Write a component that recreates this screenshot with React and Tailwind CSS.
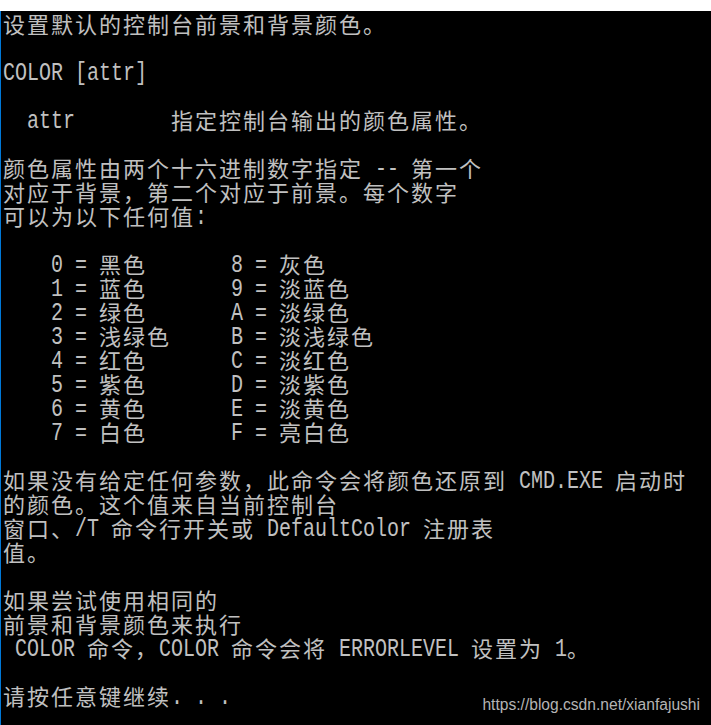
import React from "react";

const lines = [
  "设置默认的控制台前景和背景颜色。",
  "",
  "COLOR [attr]",
  "",
  "  attr        指定控制台输出的颜色属性。",
  "",
  "颜色属性由两个十六进制数字指定 -- 第一个",
  "对应于背景，第二个对应于前景。每个数字",
  "可以为以下任何值:",
  "",
  "    0 = 黑色       8 = 灰色",
  "    1 = 蓝色       9 = 淡蓝色",
  "    2 = 绿色       A = 淡绿色",
  "    3 = 浅绿色     B = 淡浅绿色",
  "    4 = 红色       C = 淡红色",
  "    5 = 紫色       D = 淡紫色",
  "    6 = 黄色       E = 淡黄色",
  "    7 = 白色       F = 亮白色",
  "",
  "如果没有给定任何参数，此命令会将颜色还原到 CMD.EXE 启动时",
  "的颜色。这个值来自当前控制台",
  "窗口、/T 命令行开关或 DefaultColor 注册表",
  "值。",
  "",
  "如果尝试使用相同的",
  "前景和背景颜色来执行",
  " COLOR 命令，COLOR 命令会将 ERRORLEVEL 设置为 1。",
  "",
  "请按任意键继续. . .",
];

function Line({ text }) {
  const runs = text.match(/[\x00-\x7f]+|[^\x00-\x7f]+/g) || [];
  return (
    <div className="h-[24px] leading-[24px] whitespace-pre">
      {runs.map((r, i) =>
        /^[\x00-\x7f]/.test(r) ? (
          <span
            key={i}
            className="inline-block align-top h-[24px] leading-[24px] overflow-visible"
            style={{ width: r.length * 12 }}
          >
            <span
              className="inline-block origin-left scale-x-80 translate-y-[3px] font-['Liberation_Mono',monospace] text-[25px] leading-[24px] whitespace-pre"
              style={{ marginRight: -r.length * 3 }}
            >
              {r}
            </span>
          </span>
        ) : (
          <span
            key={i}
            className="inline-block align-top h-[24px] leading-[24px] font-['Noto_Sans_CJK_SC',sans-serif] text-[22px] tracking-[2px] whitespace-pre"
          >
            {r}
          </span>
        )
      )}
    </div>
  );
}

export default function App() {
  return (
    <div className="w-[711px] h-[725px] bg-white overflow-hidden relative">
      <div className="mt-[11px] h-[714px] bg-black border-l border-[#0078d7] pl-[2px] text-[#c0c0c0]">
        {lines.map((l, i) => (
          <Line key={i} text={l} />
        ))}
      </div>
      <div className="absolute right-[11px] bottom-[11px] font-['Liberation_Sans',Arial,sans-serif] text-[15.6px] leading-[18px] text-[#b4b4b4]">
        https://blog.csdn.net/xianfajushi
      </div>
    </div>
  );
}
